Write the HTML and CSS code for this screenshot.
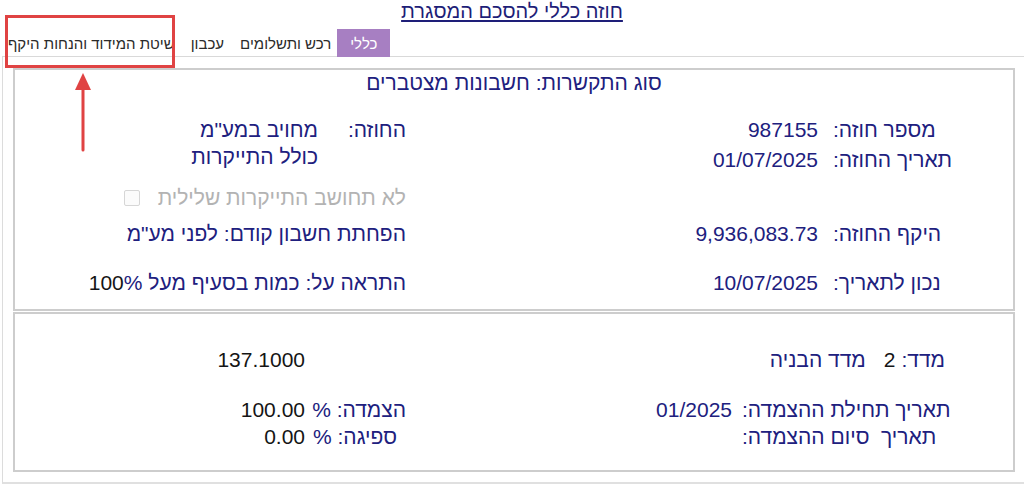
FILE: index.html
```html
<!DOCTYPE html>
<html lang="he" dir="rtl">
<head>
<meta charset="utf-8">
<title>חוזה כללי</title>
<link rel="stylesheet" href="styles.css">
</head>
<body>
<div class="page">
  <h1 class="title"><span>חוזה כללי להסכם המסגרת</span></h1>
  <nav class="tabs">
    <span class="tab active">כללי</span>
    <span class="tab">רכש ותשלומים</span>
    <span class="tab">עכבון</span>
    <span class="tab">שיטת המידוד והנחות היקף</span>
  </nav>
  <div class="panel">
    <section class="box box1">
      <div class="head">סוג התקשרות: חשבונות מצטברים</div>
      <div class="row ra">
        <div class="half rh"><span class="lbl">מספר חוזה:</span><span class="val">987155</span></div>
        <div class="half lh"><span class="lbl2">החוזה:</span><span class="val2">מחויב במע"מ</span></div>
      </div>
      <div class="row rb">
        <div class="half rh"><span class="lbl">תאריך החוזה:</span><span class="val">01/07/2025</span></div>
        <div class="half lh lh-up"><span class="lbl2"></span><span class="val2">כולל התייקרות</span></div>
      </div>
      <div class="row rc">
        <div class="half rh"></div>
        <div class="half lh"><span class="muted">לא תחושב התייקרות שלילית</span><span class="check"></span></div>
      </div>
      <div class="row rd">
        <div class="half rh"><span class="lbl">היקף החוזה:</span><span class="val">9,936,083.73</span></div>
        <div class="half lh"><span>הפחתת חשבון קודם: לפני מע"מ</span></div>
      </div>
      <div class="row re">
        <div class="half rh"><span class="lbl">נכון לתאריך:</span><span class="val">10/07/2025</span></div>
        <div class="half lh"><span>התראה על: כמות בסעיף מעל <span class="blk">100</span>%</span></div>
      </div>
    </section>
    <section class="box box2">
      <div class="row rm">
        <div class="half rh2"><span>מדד:</span><span class="blk">2</span><span class="idx">מדד הבניה</span></div>
        <div class="half lh3"><span class="blk">137.1000</span></div>
      </div>
      <div class="row rt1">
        <div class="half rh3"><span class="lbl3">תאריך תחילת ההצמדה:</span><span class="val3">01/2025</span></div>
        <div class="half lh4"><span class="lbl4">הצמדה: %</span><span class="val4 blk">100.00</span></div>
      </div>
      <div class="row rt2">
        <div class="half rh3"><span class="lbl3">תאריך&nbsp; סיום ההצמדה:</span><span class="val3"></span></div>
        <div class="half lh4"><span class="lbl4">ספיגה: %</span><span class="val4 blk">0.00</span></div>
      </div>
    </section>
  </div>
  <div class="annot-box"></div>
  <svg class="annot-arrow" width="30" height="90" viewBox="0 0 30 90" aria-hidden="true">
    <line x1="15" y1="16" x2="15" y2="78" stroke="#e04343" stroke-width="3" stroke-linecap="round"/>
    <polygon points="15,1 7,18 23,18" fill="#e04343"/>
  </svg>
</div>
</body>
</html>
```

FILE: styles.css
```css
* { box-sizing: border-box; margin: 0; padding: 0; }
html, body { background: #fff; }
body {
  font-family: "Liberation Sans", Arial, "DejaVu Sans", sans-serif;
  color: #20207e;
  width: 1024px;
  height: 486px;
  overflow: hidden;
}
.page { position: relative; width: 1024px; height: 486px; }

.title {
  height: 29px;
  text-align: center;
  font-size: 20px;
  font-weight: normal;
  line-height: 22px;
  padding-top: 0;
  color: #1e1e78;
}
.title span { text-decoration: underline; text-underline-offset: 2px; }

.tabs {
  display: flex;
  justify-content: flex-end;
  height: 27px;
}
.tab {
  display: block;
  padding: 0 8px;
  height: 27px;
  line-height: 29px;
  font-size: 15px;
  color: #2a2a2a;
  white-space: nowrap;
}
.tab.active {
  background: #a77fc2;
  color: #fff;
  padding: 0 13px;
  height: 28px;
  margin-left: -2px;
}

.panel {
  margin-left: 2px;
  width: 1040px;
  margin-right: -18px;
  height: 428px;
  border-top: 1px solid #d9d9d9;
  border-left: 1px solid #dcdcdc;
  border-bottom: 2px solid #e0e0e0;
  padding-top: 11px;
  padding-left: 10px;
  display: flex;
  flex-direction: column;
  align-items: flex-end;
  padding-right: 0;
}
.box {
  width: 1002px;
  border: 2px solid #cdcdcd;
  margin-right: 25px;
}
.box1 { height: 243px; margin-bottom: 1px; }
.box2 { height: 160px; }

.head {
  height: 26px;
  line-height: 26px;
  text-align: center;
  font-size: 21px;
}
.row {
  display: grid;
  grid-template-columns: 493px 505px;
  height: 28px;
  line-height: 28px;
  font-size: 21px;
}
.ra { margin-top: 20px; }
.rb { margin-top: 2px; }
.rc { margin-top: 10px; }
.rd { margin-top: 8px; }
.re { margin-top: 21px; }

.half { display: flex; align-items: center; white-space: nowrap; }
.rh { padding-right: 50px; }
.lbl { width: 130px; text-align: left; }
.val { margin-right: 15px; }
.lh { padding-right: 114px; }
.lh-up { position: relative; top: -3px; }
.lbl2 { width: 88px; flex: none; }
.muted { color: #b3b3b3; }
.check {
  width: 16px;
  height: 16px;
  border: 1px solid #d6d6d6;
  border-radius: 2px;
  background: #fbfbfb;
  margin-right: 18px;
}
.blk { color: #151515; }

.rm { margin-top: 32px; }
.rt1 { margin-top: 22px; height: 27px; line-height: 27px; }
.rt2 { height: 27px; line-height: 27px; }
.rh2 { padding-right: 68px; gap: 0; }
.rh2 .blk { margin-right: 6px; }
.rh2 .idx { margin-right: 18px; }
.lh3 { padding-right: 215px; }
.rh3 { padding-right: 61px; }
.lbl3 { width: 210px; text-align: left; }
.val3 { margin-right: 10px; }
.lh4 { padding-right: 114px; }
.lbl4 { width: 93px; text-align: left; }
.val4 { margin-right: 8px; }

.annot-box {
  position: absolute;
  left: 5px;
  top: 15px;
  width: 170px;
  height: 53px;
  border: 3px solid #e04343;
}
.annot-arrow {
  position: absolute;
  left: 68px;
  top: 72px;
}
```
